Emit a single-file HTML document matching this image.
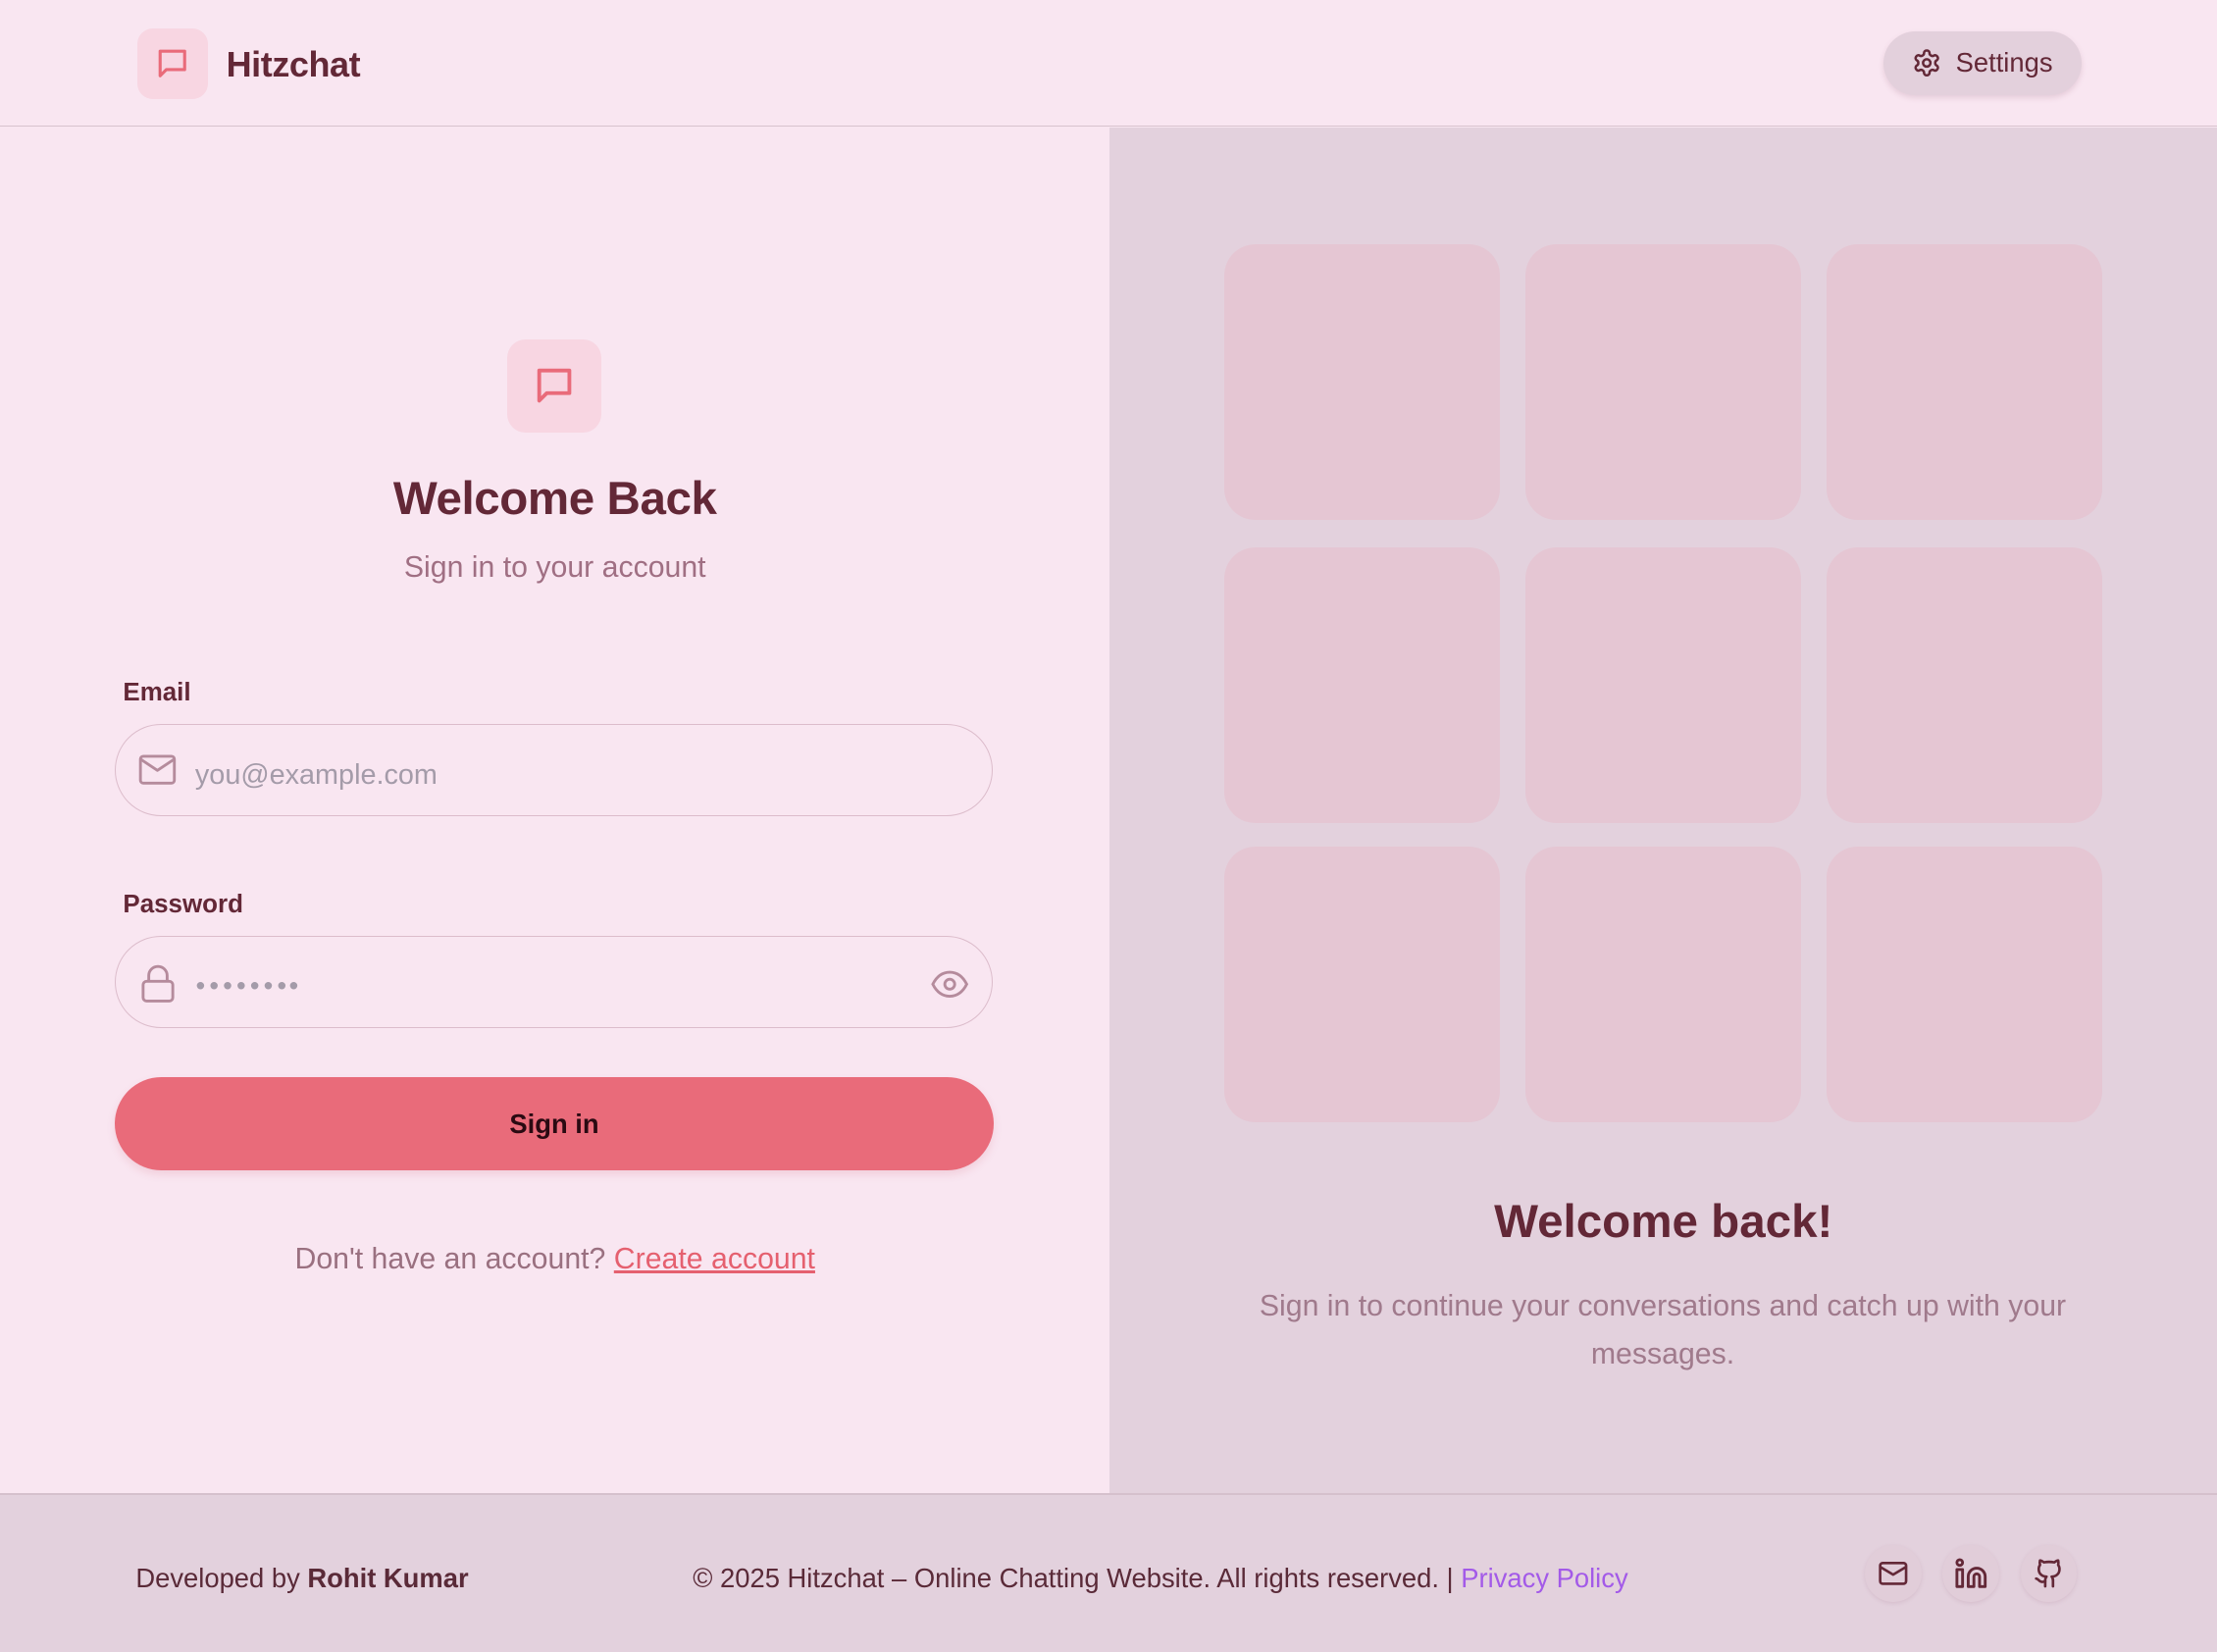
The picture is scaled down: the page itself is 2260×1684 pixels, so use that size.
<!DOCTYPE html>
<html><head><meta charset="utf-8"><style>
html,body{margin:0;padding:0;overflow:hidden;}
body{width:2260px;height:1684px;background:#f9e6f1;font-family:"Liberation Sans",sans-serif;}
#w{zoom:1.44133;width:1568px;height:1168px;position:relative;color:#632837;}
.a{position:absolute;}
.hdr{left:0;top:0;width:1568px;height:89px;border-bottom:1px solid #d7c3ce;background:#f9e6f1;}
.logo{left:97px;top:20px;width:50px;height:50px;border-radius:11px;background:#f8d6e2;display:flex;align-items:center;justify-content:center;}
.brand{left:160px;top:31px;font-size:25px;font-weight:bold;letter-spacing:-0.3px;}
.set{left:1332px;top:22px;width:140px;height:45px;border-radius:23px;background:#e3d0dc;box-shadow:0 2px 4px rgba(120,60,90,.15);display:flex;align-items:center;justify-content:center;gap:10px;font-size:19px;}
.left{left:0;top:90px;width:785px;height:966px;background:#f9e6f1;}
.right{left:785px;top:90px;width:783px;height:966px;background:#e3d1dd;}
.ibox{left:359px;top:240px;width:66px;height:66px;border-radius:13px;background:#f8d6e2;display:flex;align-items:center;justify-content:center;}
.c{text-align:center;}
.lbl{font-size:18px;font-weight:bold;left:87px;}
.inp{left:81px;width:620px;height:64px;border:1px solid #dcbccb;border-radius:33px;}
.btn{left:81px;top:762px;width:622px;height:66px;border-radius:33px;background:#e96b7a;box-shadow:0 3px 6px rgba(200,80,100,.15);display:flex;align-items:center;justify-content:center;font-size:19px;font-weight:bold;color:#2a0a12;}
.sq{width:195px;height:195px;border-radius:22px;background:#e5c6d3;}
.ftr{left:0;top:1056px;width:1568px;height:112px;background:#e3d1dd;border-top:2px solid #d5c0cc;}
.fi{width:40px;height:40px;border-radius:50%;background:#e1cdd9;box-shadow:0 1px 3px rgba(120,60,90,.12);display:flex;align-items:center;justify-content:center;top:1093px;}
</style></head><body><div id="w">
<div class="a hdr"></div>
<div class="a logo"><svg width="26" height="26" viewBox="0 0 24 24" fill="none" stroke="#e96b7a" stroke-width="2" stroke-linejoin="round"><path d="M4 4h16v12H8l-4 4z"/></svg></div>
<div class="a brand">Hitzchat</div>
<div class="a set"><svg width="21" height="21" viewBox="0 0 24 24" fill="none" stroke="#632837" stroke-width="2" stroke-linejoin="round"><path d="M12.22 2h-.44a2 2 0 0 0-2 2v.18a2 2 0 0 1-1 1.73l-.43.25a2 2 0 0 1-2 0l-.15-.08a2 2 0 0 0-2.73.73l-.22.38a2 2 0 0 0 .73 2.730l.15.1a2 2 0 0 1 1 1.72v.51a2 2 0 0 1-1 1.74l-.15.09a2 2 0 0 0-.73 2.73l.22.38a2 2 0 0 0 2.73.73l.15-.08a2 2 0 0 1 2 0l.43.25a2 2 0 0 1 1 1.73V20a2 2 0 0 0 2 2h.44a2 2 0 0 0 2-2v-.18a2 2 0 0 1 1-1.73l.43-.25a2 2 0 0 1 2 0l.15.08a2 2 0 0 0 2.73-.73l.22-.39a2 2 0 0 0-.73-2.730l-.15-.08a2 2 0 0 1-1-1.74v-.5a2 2 0 0 1 1-1.740l.15-.09a2 2 0 0 0 .73-2.730l-.22-.38a2 2 0 0 0-2.730-.73l-.15.08a2 2 0 0 1-2 0l-.43-.25a2 2 0 0 1-1-1.73V4a2 2 0 0 0-2-2z"/><circle cx="12" cy="12" r="3"/></svg><span>Settings</span></div>

<div class="a left"></div>
<div class="a right"></div>
<div class="a ibox"><svg width="32" height="32" viewBox="0 0 24 24" fill="none" stroke="#e96b7a" stroke-width="2" stroke-linejoin="round"><path d="M4 4h16v12H8l-4 4z"/></svg></div>
<div class="a c" style="left:0;width:785px;top:334px;font-size:33px;font-weight:bold;letter-spacing:-0.3px;">Welcome Back</div>
<div class="a c" style="left:0;width:785px;top:390px;font-size:21px;color:#a06f83;">Sign in to your account</div>

<div class="a lbl" style="top:480px;">Email</div>
<div class="a inp" style="top:512px;"></div>
<svg class="a" style="left:98px;top:533px" width="27" height="24" viewBox="0 0 27 24" fill="none" stroke="#b58b9c" stroke-width="2" stroke-linejoin="round"><rect x="1.5" y="2" width="24" height="19" rx="2"/><path d="M1.5 4l12 8 12-8"/></svg>
<div class="a" style="left:138px;top:537px;font-size:20px;color:#a49ba9;">you@example.com</div>

<div class="a lbl" style="top:630px;">Password</div>
<div class="a inp" style="top:662px;"></div>
<svg class="a" style="left:99px;top:682px" width="26" height="28" viewBox="0 0 26 28" fill="none" stroke="#b58b9c" stroke-width="2"><rect x="2" y="12" width="21" height="14" rx="2.5"/><path d="M6 12V8a6.5 6.5 0 0 1 13 0v4"/></svg>
<svg class="a" style="left:139px;top:693px" width="72" height="8" viewBox="0 0 72 8" fill="#a49ba9"><circle cx="3" cy="4" r="2.6"/><circle cx="12.6" cy="4" r="2.6"/><circle cx="22.2" cy="4" r="2.6"/><circle cx="31.8" cy="4" r="2.6"/><circle cx="41.4" cy="4" r="2.6"/><circle cx="51" cy="4" r="2.6"/><circle cx="60.6" cy="4" r="2.6"/><circle cx="69" cy="4" r="2.6"/></svg>
<svg class="a" style="left:658px;top:684px" width="28" height="24" viewBox="0 0 28 24" fill="none" stroke="#b58b9c" stroke-width="2"><path d="M2 12C5 6 9 3.5 14 3.5S23 6 26 12c-3 6-7 8.5-12 8.5S5 18 2 12z"/><circle cx="14" cy="12" r="3.5"/></svg>

<div class="a btn">Sign in</div>
<div class="a c" style="left:0;width:785px;top:879px;font-size:21px;color:#9a7080;">Don't have an account? <span style="color:#e5606f;text-decoration:underline;">Create account</span></div>

<div class="a sq" style="left:866px;top:173px"></div><div class="a sq" style="left:1079px;top:173px"></div><div class="a sq" style="left:1292px;top:173px"></div>
<div class="a sq" style="left:866px;top:387px"></div><div class="a sq" style="left:1079px;top:387px"></div><div class="a sq" style="left:1292px;top:387px"></div>
<div class="a sq" style="left:866px;top:599px"></div><div class="a sq" style="left:1079px;top:599px"></div><div class="a sq" style="left:1292px;top:599px"></div>
<div class="a c" style="left:785px;width:783px;top:845px;font-size:33px;font-weight:bold;">Welcome back!</div>
<div class="a c" style="left:856px;width:640px;top:907px;font-size:21px;line-height:34px;color:#a07a8c;">Sign in to continue your conversations and catch up with your messages.</div>

<div class="a ftr"></div>
<div class="a" style="left:96px;top:1105px;font-size:19px;color:#5a2a38;">Developed by <b>Rohit Kumar</b></div>
<div class="a" style="left:490px;top:1105px;font-size:19px;color:#5a2a38;">© 2025 Hitzchat – Online Chatting Website. All rights reserved. | <span style="color:#a35ae8;">Privacy Policy</span></div>
<div class="a fi" style="left:1319px"><svg width="22" height="22" viewBox="0 0 24 24" fill="none" stroke="#632837" stroke-width="2" stroke-linejoin="round"><rect x="2" y="4" width="20" height="16" rx="2"/><path d="M2 7l10 6 10-6"/></svg></div>
<div class="a fi" style="left:1374px"><svg width="24" height="24" viewBox="0 0 24 24" fill="none" stroke="#632837" stroke-width="2" stroke-linejoin="round"><rect x="2" y="9" width="4" height="12"/><circle cx="4" cy="4" r="2"/><path d="M16 8a6 6 0 0 1 6 6v7h-4v-7a2 2 0 0 0-4 0v7h-4v-7a6 6 0 0 1 6-6z"/></svg></div>
<div class="a fi" style="left:1429px"><svg width="22" height="22" viewBox="0 0 24 24" fill="none" stroke="#632837" stroke-width="2" stroke-linejoin="round" stroke-linecap="round"><path d="M15 22v-4a4.8 4.8 0 0 0-1-3.5c3 0 6-2 6-5.5.08-1.25-.27-2.48-1-3.5.28-1.15.28-2.35 0-3.5 0 0-1 0-3 1.5-2.64-.5-5.36-.5-8 0C6 2 5 2 5 2c-.3 1.15-.3 2.35 0 3.5A5.4 5.4 0 0 0 4 9c0 3.5 3 5.5 6 5.5-.39.49-.68 1.050-.85 1.65-.17.6-.22 1.23-.15 1.85v4"/><path d="M9 18c-4.51 2-5-2-7-2"/></svg></div>
</div></body></html>
